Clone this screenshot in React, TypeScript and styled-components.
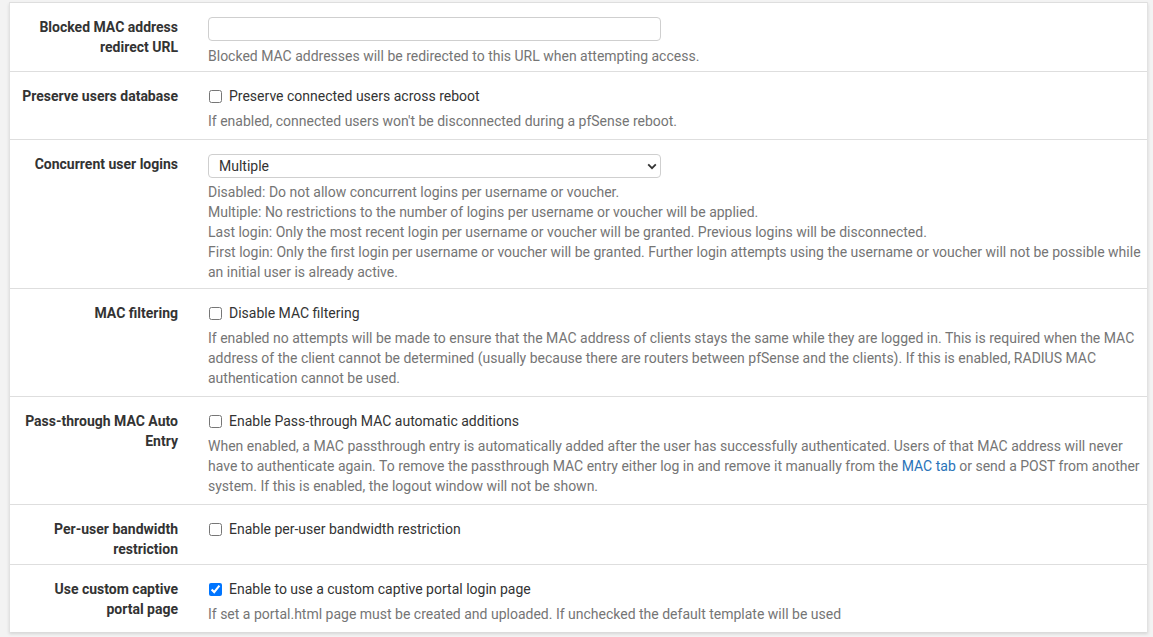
import React from "react";
import styled, { createGlobalStyle } from "styled-components";

const GlobalStyle = createGlobalStyle`
  html, body {
    margin: 0;
    padding: 0;
    background: #f3f3f3;
    font-family: Roboto, "Liberation Sans", sans-serif;
    font-size: 14px;
    color: #333;
  }
`;

const Page = styled.div`
  padding: 2px 5px 5px 9px;
`;

const Panel = styled.div`
  background: #fff;
  border-left: 1px solid #e2e2e2;
  border-right: 1px solid #e2e2e2;
  box-shadow: 0 2px 3px rgba(0, 0, 0, 0.12);
`;

const FormRow = styled.div`
  display: grid;
  grid-template-columns: 183px 1fr;
  border-top: 1px solid #dedede;
  padding: 14px 0 5px;
`;

const Label = styled.div`
  font-weight: 700;
  line-height: 20px;
  text-align: right;
  padding: 0 15px 0 8px;
  color: #333;
`;

const Field = styled.div`
  padding: 0 4px 0 15px;
  line-height: 20px;
`;

const TextInput = styled.input`
  display: block;
  box-sizing: border-box;
  width: 453px;
  height: 24px;
  border: 1px solid #cfcfcf;
  border-radius: 4px;
  margin: 0;
  outline: none;
`;

const SelectWrap = styled.div`
  position: relative;
  width: 453px;
`;

const Select = styled.select`
  display: block;
  box-sizing: border-box;
  width: 100%;
  height: 24px;
  appearance: none;
  border: 1px solid #cfcfcf;
  border-radius: 4px;
  background: #fff;
  padding: 0 0 0 10px;
  font-family: Roboto, "Liberation Sans", sans-serif;
  font-size: 14px;
  color: #333;
  margin: 0;
`;

const Chevron = styled.svg`
  position: absolute;
  right: 4px;
  top: 9px;
  pointer-events: none;
`;

const CheckLine = styled.label`
  display: flex;
  align-items: center;
  gap: 7px;
  color: #333;
`;

const Check = styled.input`
  width: 13px;
  height: 13px;
  margin: 0 0 0 1px;
`;

// help text sits a little lower and leaves more room below under a checkbox
const Help = styled.div<{ $kind: Row["control"] }>`
  margin: ${(p) => (p.$kind === "checkbox" ? "5px 0 3px" : p.$kind === "select" ? "4px 0 1px" : "5px 0 0")};
  color: #757575;
`;

const Link = styled.a`
  color: #2a73b8;
  text-decoration: none;
`;

type Row = {
  label: string;
  control: "input" | "select" | "checkbox";
  text?: string;
  checked?: boolean;
  help?: React.ReactNode[];
};

const rows: Row[] = [
  {
    label: "Blocked MAC address redirect URL",
    control: "input",
    help: ["Blocked MAC addresses will be redirected to this URL when attempting access."],
  },
  {
    label: "Preserve users database",
    control: "checkbox",
    text: "Preserve connected users across reboot",
    help: ["If enabled, connected users won't be disconnected during a pfSense reboot."],
  },
  {
    label: "Concurrent user logins",
    control: "select",
    help: [
      "Disabled: Do not allow concurrent logins per username or voucher.",
      "Multiple: No restrictions to the number of logins per username or voucher will be applied.",
      "Last login: Only the most recent login per username or voucher will be granted. Previous logins will be disconnected.",
      "First login: Only the first login per username or voucher will be granted. Further login attempts using the username or voucher will not be possible while an initial user is already active.",
    ],
  },
  {
    label: "MAC filtering",
    control: "checkbox",
    text: "Disable MAC filtering",
    help: [
      "If enabled no attempts will be made to ensure that the MAC address of clients stays the same while they are logged in. This is required when the MAC address of the client cannot be determined (usually because there are routers between pfSense and the clients). If this is enabled, RADIUS MAC authentication cannot be used.",
    ],
  },
  {
    label: "Pass-through MAC Auto Entry",
    control: "checkbox",
    text: "Enable Pass-through MAC automatic additions",
    help: [
      <>
        When enabled, a MAC passthrough entry is automatically added after the user has successfully authenticated. Users of that MAC
        address will never have to authenticate again. To remove the passthrough MAC entry either log in and remove it manually from the{" "}
        <Link href="#">MAC tab</Link> or send a POST from another system. If this is enabled, the logout window will not be shown.
      </>,
    ],
  },
  {
    label: "Per-user bandwidth restriction",
    control: "checkbox",
    text: "Enable per-user bandwidth restriction",
  },
  {
    label: "Use custom captive portal page",
    control: "checkbox",
    text: "Enable to use a custom captive portal login page",
    checked: true,
    help: ["If set a portal.html page must be created and uploaded. If unchecked the default template will be used"],
  },
];

function App() {
  return (
    <>
      <GlobalStyle />
      <Page>
        <Panel>
          {rows.map((row) => (
            <FormRow key={row.label}>
              <Label>{row.label}</Label>
              <Field>
                {row.control === "input" && <TextInput type="text" />}
                {row.control === "select" && (
                  <SelectWrap>
                    <Select defaultValue="multiple">
                      <option value="disabled">Disabled</option>
                      <option value="multiple">Multiple</option>
                      <option value="last">Last login</option>
                      <option value="first">First login</option>
                    </Select>
                    <Chevron width="10" height="7" viewBox="0 0 10 7">
                      <path d="M1.2 1.4 L5 5.2 L8.8 1.4" fill="none" stroke="#333" strokeWidth="1.8" />
                    </Chevron>
                  </SelectWrap>
                )}
                {row.control === "checkbox" && (
                  <CheckLine>
                    <Check type="checkbox" defaultChecked={row.checked} />
                    {row.text}
                  </CheckLine>
                )}
                {row.help && (
                  <Help $kind={row.control}>
                    {row.help.map((h, i) => (
                      <div key={i}>{h}</div>
                    ))}
                  </Help>
                )}
              </Field>
            </FormRow>
          ))}
        </Panel>
      </Page>
    </>
  );
}

export default App;
